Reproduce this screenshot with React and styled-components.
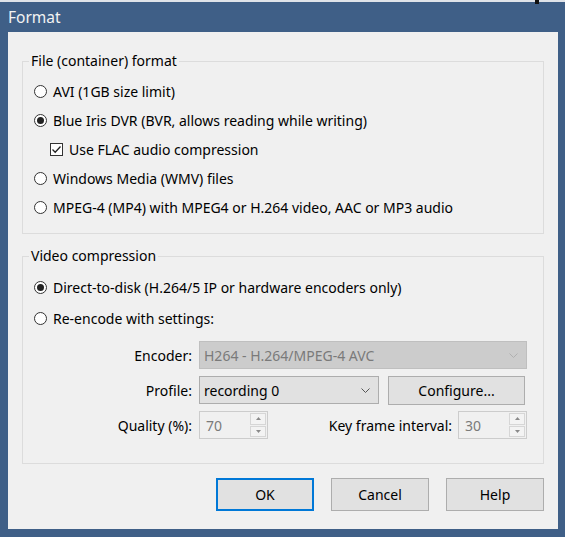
import { createGlobalStyle, styled } from 'styled-components';

const GlobalStyle = createGlobalStyle`
  html, body {
    margin: 0;
    padding: 0;
    background: #3f5f87;
  }
  * {
    box-sizing: border-box;
  }
`;

const font = `'Noto Sans', 'Open Sans', sans-serif`;

const Window = styled.div`
  width: 565px;
  height: 537px;
  display: flex;
  flex-direction: column;
  background: #3f5f87;
  font-family: ${font};
  font-size: 14px;
  color: #000;
  position: relative;
  border-top: 2px solid #dfe3e9;

  &::after {
    content: '';
    position: absolute;
    top: -2px;
    left: 535px;
    width: 4px;
    height: 4px;
    background: #111;
  }
`;

const TitleBar = styled.div`
  height: 30px;
  display: flex;
  align-items: center;
  padding-left: 8px;
  color: #f3f3f3;
  font-size: 15.5px;
`;

const Client = styled.div`
  flex: 1;
  margin: 0 7px 8px 8px;
  background: #f0f0f0;
  padding: 19px 14px 18px 14px;
  display: flex;
  flex-direction: column;
`;

const Group = styled.fieldset`
  margin: 0;
  border: 1px solid #dcdcdc;
  padding: ${(p) => p.$pad};
  min-width: 0;
  display: flex;
  flex-direction: column;

  & + & {
    margin-top: 12px;
  }
`;

const Legend = styled.legend`
  padding: 0 2px;
  margin-left: -5px;
  line-height: 20px;
`;

const Row = styled.label`
  display: flex;
  align-items: center;
  height: ${(p) => p.$h || 29}px;
  padding-left: ${(p) => p.$indent || 0}px;
  gap: 6px;
  white-space: nowrap;
`;

const RadioMark = styled.span`
  width: 13px;
  height: 13px;
  border: 1px solid #333;
  border-radius: 50%;
  background: #fff;
  display: flex;
  align-items: center;
  justify-content: center;

  &::after {
    content: '';
    width: 7px;
    height: 7px;
    border-radius: 50%;
    background: ${(p) => (p.$on ? '#222' : 'transparent')};
  }
`;

const CheckMark = styled.span`
  width: 13px;
  height: 13px;
  border: 1px solid #333;
  background: #fff;
  display: flex;
  align-items: center;
  justify-content: center;
`;

const Settings = styled.div`
  display: grid;
  grid-template-columns: 91px 328px;
  grid-auto-rows: 28px;
  column-gap: 7px;
  row-gap: 7px;
  margin: 7px 0 0 67px;
`;

const Label = styled.span`
  display: flex;
  align-items: center;
  justify-content: flex-end;
  white-space: nowrap;
  ${(p) => p.$grow && 'flex: 1;'}
`;

const Combo = styled.div`
  width: ${(p) => p.$w}px;
  height: ${(p) => p.$h || 28}px;
  display: flex;
  align-items: center;
  justify-content: space-between;
  padding: 0 8px 0 4px;
  border: 1px solid ${(p) => (p.$disabled ? '#bfbfbf' : '#adadad')};
  background: ${(p) => (p.$disabled ? '#cccccc' : '#e1e1e1')};
  color: ${(p) => (p.$disabled ? '#7a7a7a' : '#000')};
`;

const CtrlLine = styled.div`
  display: flex;
  align-items: center;
  gap: ${(p) => p.$gap || 6}px;
`;

const PushButton = styled.button`
  width: ${(p) => p.$w || 98}px;
  height: ${(p) => p.$h || 33}px;
  font-family: ${font};
  font-size: 14px;
  color: #000;
  background: #e1e1e1;
  border: ${(p) => (p.$default ? '2px solid #0078d7' : '1px solid #adadad')};
  padding: 0;
  margin: 0;
`;

const Spin = styled.div`
  width: 69px;
  height: 28px;
  display: flex;
  align-items: center;
  justify-content: space-between;
  padding: 1px 1px 1px 6px;
  border: 1px solid #cccccc;
  background: #f0f0f0;
  color: #7a7a7a;
`;

const SpinArrows = styled.div`
  display: flex;
  flex-direction: column;
  gap: 1px;
  height: 100%;
  width: 16px;
`;

const SpinArrow = styled.div`
  flex: 1;
  border: 1px solid #d6d6d6;
  background: #f3f3f3;
  display: flex;
  align-items: center;
  justify-content: center;
`;

const Footer = styled.div`
  display: flex;
  justify-content: flex-end;
  gap: 17px;
  margin-top: 14px;
`;

const Chevron = ({ color }) => (
  <svg width="9" height="5" viewBox="0 0 9 5">
    <polyline points="0.5,0.5 4.5,4.5 8.5,0.5" fill="none" stroke={color} strokeWidth="1" />
  </svg>
);

const Tri = ({ up }) => (
  <svg width="5" height="3" viewBox="0 0 5 3">
    <polygon points={up ? '0,3 2.5,0 5,3' : '0,0 5,0 2.5,3'} fill="#8a8a8a" />
  </svg>
);

const SpinBox = ({ value }) => (
  <Spin>
    <span>{value}</span>
    <SpinArrows>
      <SpinArrow>
        <Tri up />
      </SpinArrow>
      <SpinArrow>
        <Tri />
      </SpinArrow>
    </SpinArrows>
  </Spin>
);

const formats = [
  { text: 'AVI (1GB size limit)', on: false },
  { text: 'Blue Iris DVR (BVR, allows reading while writing)', on: true },
  { text: 'Use FLAC audio compression', check: true },
  { text: 'Windows Media (WMV) files', on: false },
  { text: 'MPEG-4 (MP4) with MPEG4 or H.264 video, AAC or MP3 audio', on: false },
];

const App = () => {
  return (
    <>
      <GlobalStyle />
      <Window>
        <TitleBar>Format</TitleBar>
        <Client>
          <Group $pad="6px 10px 11px 11px">
            <Legend>File (container) format</Legend>
            {formats.map((f) =>
              f.check ? (
                <Row key={f.text} $indent={16}>
                  <CheckMark>
                    <svg width="11" height="11" viewBox="0 0 11 11">
                      <polyline points="1.5,5.5 4.2,8.2 9.5,2.5" fill="none" stroke="#222" strokeWidth="1.3" />
                    </svg>
                  </CheckMark>
                  <span>{f.text}</span>
                </Row>
              ) : (
                <Row key={f.text}>
                  <RadioMark $on={f.on} />
                  <span>{f.text}</span>
                </Row>
              )
            )}
          </Group>

          <Group $pad="6px 10px 24px 11px">
            <Legend>Video compression</Legend>
            <Row $h={31}>
              <RadioMark $on />
              <span>Direct-to-disk (H.264/5 IP or hardware encoders only)</span>
            </Row>
            <Row $h={31}>
              <RadioMark />
              <span>Re-encode with settings:</span>
            </Row>

            <Settings>
              <Label>Encoder:</Label>
              <Combo $w={328} $disabled>
                <span>H264 - H.264/MPEG-4 AVC</span>
                <Chevron color="#b0b0b0" />
              </Combo>

              <Label>Profile:</Label>
              <CtrlLine $gap={9}>
                <Combo $w={180}>
                  <span>recording 0</span>
                  <Chevron color="#555" />
                </Combo>
                <PushButton $w={137} $h={29}>
                  Configure...
                </PushButton>
              </CtrlLine>

              <Label>Quality (%):</Label>
              <CtrlLine>
                <SpinBox value="70" />
                <Label $grow>Key frame interval:</Label>
                <SpinBox value="30" />
              </CtrlLine>
            </Settings>
          </Group>

          <Footer>
            <PushButton $default>OK</PushButton>
            <PushButton>Cancel</PushButton>
            <PushButton>Help</PushButton>
          </Footer>
        </Client>
      </Window>
    </>
  );
};

export default App;
